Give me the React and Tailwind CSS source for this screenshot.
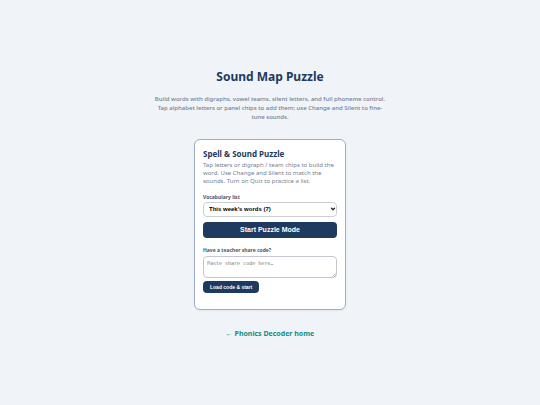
import { useState } from "react";
import { ChevronDown } from "lucide-react";

const wordLists = [{ id: "week", name: "This week's words (7)" }];

const PuzzleCard = () => {
  const [list, setList] = useState("week");
  const [code, setCode] = useState("");

  return (
    <section className="w-full max-w-[152px] rounded-md border border-[#9dabc4] bg-white px-2 pt-2 pb-4 shadow-xs">
      <h2 className="text-[8px] leading-[11px] font-bold text-[#1e3a5f]">Spell &amp; Sound Puzzle</h2>
      <p className="mt-0.5 text-[6px] leading-[8px] text-[#718096]">
        Tap letters or digraph / team chips to build the word. Use Change and Silent to match the
        sounds. Turn on Quiz to practice a list.
      </p>

      <label htmlFor="list" className="mt-2 block text-[5px] leading-[8px] font-bold text-[#4a5568]">
        Vocabulary list
      </label>
      <div className="relative mt-px">
        <select
          id="list"
          value={list}
          onChange={(e) => setList(e.target.value)}
          className="block h-[15px] w-full appearance-none rounded-sm border border-[#cbd0d8] bg-white pr-3 pl-[5px] font-['Liberation_Sans',sans-serif] text-[6px] leading-[8px] font-bold text-black"
        >
          {wordLists.map((item) => (
            <option key={item.id} value={item.id}>
              {item.name}
            </option>
          ))}
        </select>
        <ChevronDown
          strokeWidth={5}
          className="pointer-events-none absolute inset-y-0 right-px my-auto h-[6px] w-[6px] text-[#222222]"
        />
      </div>
      <button
        type="button"
        className="mt-[5px] block h-4 w-full rounded-sm bg-[#1e3a5f] font-['Liberation_Sans',sans-serif] text-[7px] leading-[8px] font-bold text-white"
      >
        Start Puzzle Mode
      </button>

      <label htmlFor="code" className="mt-2 block text-[5px] leading-[8px] font-bold text-[#4a5568]">
        Have a teacher share code?
      </label>
      <div className="relative mt-0.5">
        <textarea
          id="code"
          value={code}
          onChange={(e) => setCode(e.target.value)}
          placeholder="Paste share code here…"
          className="block h-[22px] w-full resize-none rounded-sm border border-[#c4c8ce] bg-white px-[3px] py-[2px] font-['DejaVu_Sans_Mono',monospace] text-[5px] leading-[8px] text-black placeholder:text-[#757575]"
        />
        <svg viewBox="0 0 6 6" className="pointer-events-none absolute right-px bottom-px h-1 w-1 text-[#888888]">
          <path d="M0.5 5.5 5.5 0.5M3.5 5.5 5.5 3.5" fill="none" stroke="currentColor" />
        </svg>
      </div>
      <button
        type="button"
        className="mt-[3px] block h-3 rounded-sm bg-[#1e3a5f] px-[7px] font-['Liberation_Sans',sans-serif] text-[5px] leading-[8px] font-bold text-white"
      >
        Load code &amp; start
      </button>
    </section>
  );
};

export default function App() {
  return (
    <main className="flex min-h-screen flex-col items-center justify-center bg-[#f0f4f8] px-4 pt-px font-['Noto_Sans',sans-serif]">
      <h1 className="text-[12px] leading-[18px] font-bold text-[#1e3a5f]">Sound Map Puzzle</h1>
      <p className="mt-[9px] mb-[17px] max-w-[232px] text-center text-[6px] leading-[9px] font-medium text-[#718096]">
        Build words with digraphs, vowel teams, silent letters, and full phoneme control. Tap
        alphabet letters or panel chips to add them; use Change and Silent to fine-tune sounds.
      </p>
      <PuzzleCard />
      <a href="#home" className="mt-[18px] text-[7px] leading-[11px] font-bold text-[#0d9080]">
        ← Phonics Decoder home
      </a>
    </main>
  );
}
